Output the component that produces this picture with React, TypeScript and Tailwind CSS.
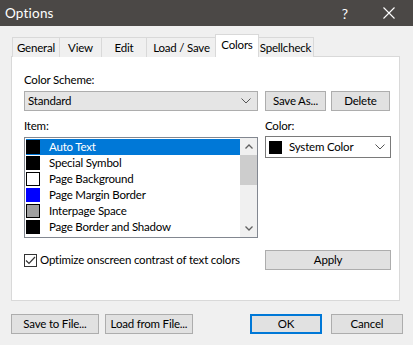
import { useState } from "react";

const items = [
  { name: "Auto Text", color: "#000000" },
  { name: "Special Symbol", color: "#000000" },
  { name: "Page Background", color: "#ffffff" },
  { name: "Page Margin Border", color: "#0000ff" },
  { name: "Interpage Space", color: "#a0a0a0" },
  { name: "Page Border and Shadow", color: "#000000" },
];

const tabs = ["General", "View", "Edit", "Load / Save", "Colors", "Spellcheck"];
const tabWidths = [48, 43, 46, 71, 44, 57];

function Chevron() {
  return (
    <svg width="10" height="6" viewBox="0 0 10 6" className="shrink-0">
      <path d="M0.5 0.5 L5 5 L9.5 0.5" fill="none" stroke="#555" strokeWidth="1" />
    </svg>
  );
}

function Btn({ children, className = "" }: { children: React.ReactNode; className?: string }) {
  return (
    <button className={`h-[20px] bg-[#e1e1e1] border border-[#adadad] leading-none text-black flex items-center justify-center whitespace-nowrap ${className}`}>
      {children}
    </button>
  );
}

export default function App() {
  const [checked, setChecked] = useState(true);
  return (
    <div className="w-[413px] h-[345px] bg-[#f0f0f0] overflow-hidden font-['Lato','Noto_Sans',sans-serif] text-[11.5px] tracking-[-0.2px] text-black whitespace-nowrap">
      {/* title bar */}
      <div className="h-[26px] bg-[#4b4846] flex items-center pl-[5px] text-white tracking-normal">
        <span className="text-[13.5px] tracking-[0.2px]">Options</span>
        <span className="ml-auto mr-[35px] text-[14px]">?</span>
        <svg width="12" height="12" viewBox="0 0 12 12" className="mr-[18px]">
          <path d="M0.5 0.5 L11.5 11.5 M11.5 0.5 L0.5 11.5" stroke="#fff" strokeWidth="1.1" />
        </svg>
      </div>

      {/* tabs */}
      <div className="flex items-end pl-[12px] h-[31px]">
        {tabs.map((t, i) => {
          const sel = t === "Colors";
          return (
            <div
              key={t}
              style={{ width: tabWidths[i] }}
              className={
                sel
                  ? "h-[23px] bg-white border border-b-0 border-[#d9d9d9] flex items-center justify-center -ml-[2px] -mr-[1px] z-10 relative pb-[3px]"
                  : "h-[20px] bg-[#f0f0f0] border border-b-0 border-[#d9d9d9] -ml-px first:ml-0 flex items-center justify-center"
              }
            >
              {t}
            </div>
          );
        })}
      </div>

      {/* panel */}
      <div className="ml-[11px] w-[389px] h-[245px] bg-white border border-[#d9d9d9] -mt-px pl-[12px] pt-[15px]">
        <div className="h-[16px] leading-[16px]">Color Scheme:</div>
        <div className="flex gap-[7px] mt-[3px]">
          <div className="w-[234px] h-[20px] bg-[#e5e5e5] border border-[#adadad] flex items-center pl-[3px] pr-[6px]">
            <span className="flex-1">Standard</span>
            <Chevron />
          </div>
          <Btn className="w-[61px]">Save As...</Btn>
          <Btn className="w-[59px] ml-[-2px]">Delete</Btn>
        </div>

        <div className="flex gap-[7px] mt-[7px]">
          <div className="w-[234px]">
            <div className="h-[16px] leading-[16px]">Item:</div>
            <div className="mt-[3px] h-[101px] border border-[#828790] flex">
              <div className="flex-1 pt-px pl-px">
                {items.map((it, i) => (
                  <div
                    key={it.name}
                    className={`h-[16px] flex items-center ${i === 0 ? "bg-[#0078d7] text-white" : ""}`}
                  >
                    <span
                      className="w-[14px] h-[14px] border shrink-0"
                      style={{ background: it.color, borderColor: it.color === "#ffffff" || it.color === "#a0a0a0" ? "#000" : it.color }}
                    />
                    <span className="ml-[9px] leading-none">{it.name}</span>
                  </div>
                ))}
              </div>
              <div className="w-[17px] bg-[#f0f0f0] flex flex-col items-center">
                <div className="h-[17px] flex items-center justify-center">
                  <svg width="8" height="5" viewBox="0 0 8 5">
                    <path d="M0.5 4.5 L4 1 L7.5 4.5" fill="none" stroke="#606060" strokeWidth="1.3" />
                  </svg>
                </div>
                <div className="w-[17px] h-[30px] bg-[#cdcdcd]" />
                <div className="flex-1" />
                <div className="h-[17px] flex items-center justify-center">
                  <svg width="8" height="5" viewBox="0 0 8 5">
                    <path d="M0.5 0.5 L4 4 L7.5 0.5" fill="none" stroke="#606060" strokeWidth="1.3" />
                  </svg>
                </div>
              </div>
            </div>
          </div>
          <div className="w-[126px]">
            <div className="h-[16px] leading-[16px]">Color:</div>
            <div className="mt-[2px] h-[22px] border border-[#7a7a7a] bg-white flex items-center pl-[3px] pr-[5px]">
              <span className="w-[13px] h-[13px] bg-black shrink-0" />
              <span className="flex-1 ml-[7px]">System Color</span>
              <Chevron />
            </div>
          </div>
        </div>

        <div className="flex items-center mt-[12px] h-[20px]">
          <div className="w-[234px] flex items-center">
            <button
              onClick={() => setChecked(!checked)}
              className="w-[13px] h-[13px] border border-[#333] bg-white flex items-center justify-center"
            >
              {checked && (
                <svg width="11" height="9" viewBox="0 0 11 9">
                  <path d="M1 4.5 L4 7.5 L10 1" fill="none" stroke="#333" strokeWidth="1.2" />
                </svg>
              )}
            </button>
            <span className="ml-[3px]">Optimize onscreen contrast of text colors</span>
          </div>
          <Btn className="w-[126px] ml-[7px]">Apply</Btn>
        </div>
      </div>

      {/* bottom buttons */}
      <div className="flex items-center mt-[13px] pl-[11px]">
        <Btn className="w-[88px]">Save to File...</Btn>
        <Btn className="w-[88px] ml-[6px]">Load from File...</Btn>
        <button className="ml-[57px] w-[72px] h-[20px] bg-[#e1e1e1] border-2 border-[#0078d7] flex items-center justify-center">
          OK
        </button>
        <Btn className="w-[72px] ml-[9px]">Cancel</Btn>
      </div>
    </div>
  );
}
